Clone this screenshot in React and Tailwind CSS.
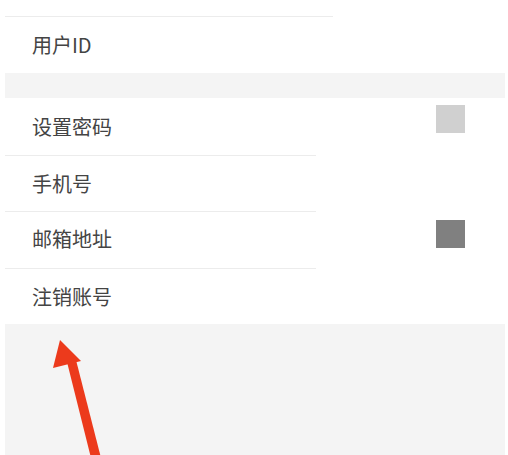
export default function App() {
  const font = { fontFamily: '"Noto Sans CJK SC", "Noto Sans", sans-serif' }

  return (
    <div className="w-[508px] h-[455px] bg-white pl-[5px] pr-[3px] overflow-hidden text-[#444]" style={font}>
      {/* clipped row above */}
      <div className="h-[17px] w-[328px] border-b border-[#ececec]" />

      <div className="h-[56px] flex items-center pl-[27px] text-[20px]">用户ID</div>

      <div className="h-[25px] bg-[#f4f4f4]" />

      <div className="h-[57px] flex items-start">
        <span className="pl-[27px] pt-[14px] text-[20px]">设置密码</span>
        <div className="ml-auto mr-[40px] mt-[7px] w-[29px] h-[28px] bg-[#d0d0d0]" />
      </div>
      <div className="h-px w-[311px] bg-[#ececec]" />

      <div className="h-[55px] flex items-center pl-[27px] text-[20px]">手机号</div>
      <div className="h-px w-[311px] bg-[#ececec]" />

      <div className="h-[56px] flex items-start">
        <span className="pl-[27px] pt-[12px] text-[20px]">邮箱地址</span>
        <div className="ml-auto mr-[40px] mt-[8px] w-[29px] h-[28px] bg-[#808080]" />
      </div>
      <div className="h-px w-[311px] bg-[#ececec]" />

      <div className="h-[55px] flex items-center pl-[27px] text-[20px]">注销账号</div>

      <div className="relative h-[140px] bg-[#f4f4f4]">
        <svg className="absolute left-[30px] top-[14px]" width="80" height="120" viewBox="0 0 80 120">
          <polygon points="25,2 18,30 46,23" fill="#ec3a1c" />
          <polygon points="32,24 41,22 66,120 56,120" fill="#ec3a1c" />
        </svg>
      </div>
    </div>
  )
}
